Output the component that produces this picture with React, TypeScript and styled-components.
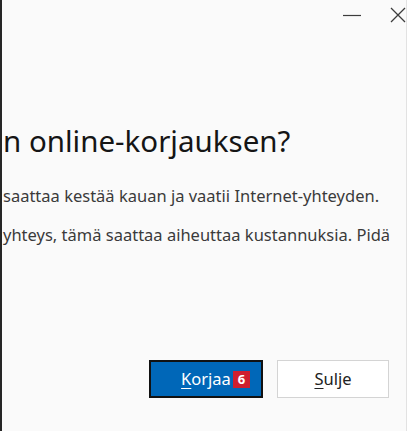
import React from 'react';
import styled, { createGlobalStyle } from 'styled-components';

const GlobalStyle = createGlobalStyle`
  html, body {
    margin: 0;
    padding: 0;
    background: #fafafa;
  }
`;

const Window = styled.div`
  box-sizing: border-box;
  width: 407px;
  height: 431px;
  display: flex;
  flex-direction: column;
  background: #fafafa;
  border-left: 2px solid #262626;
  border-right: 1px solid #e2e2e2;
  overflow: hidden;
  font-family: 'Noto Sans', 'Open Sans', sans-serif;
`;

const TitleBar = styled.div`
  height: 30px;
  display: flex;
  justify-content: flex-end;
  align-items: center;
  gap: 29px;
  padding-right: 0;
`;

const ControlButton = styled.button`
  border: none;
  background: none;
  padding: 0;
  display: flex;
  align-items: center;
  justify-content: center;
  color: #3c3c3c;
`;

const Content = styled.div`
  flex: 1;
  display: flex;
  flex-direction: column;
  padding-left: 1px;
`;

const Heading = styled.h1`
  margin: 93px 0 0 0;
  font-size: 29.5px;
  line-height: 36px;
  font-weight: 400;
  color: #151515;
  white-space: nowrap;
`;

const Paragraph = styled.p<{ $gap: number }>`
  margin: ${p => p.$gap}px 0 0 0;
  font-size: 16.5px;
  line-height: 20px;
  color: #3a3a3a;
  white-space: nowrap;
`;

const Footer = styled.div`
  margin-top: auto;
  display: flex;
  justify-content: flex-end;
  gap: 14px;
  padding: 0 17px 33px 0;
`;

const Button = styled.button<{ $primary?: boolean }>`
  position: relative;
  box-sizing: border-box;
  height: 38px;
  width: ${p => (p.$primary ? '114px' : '112px')};
  font-family: inherit;
  font-size: 16.5px;
  border: ${p => (p.$primary ? '2px solid #111' : '1px solid #d4d4d4')};
  background: ${p => (p.$primary ? '#0067b8' : '#ffffff')};
  color: ${p => (p.$primary ? '#ffffff' : '#222222')};
  box-shadow: ${p => (p.$primary ? 'inset 0 0 0 1px #0067b8' : 'none')};
  padding: 0 0 2px 0;
  cursor: pointer;

  u {
    text-underline-offset: 3px;
  }
`;

const Badge = styled.span`
  position: absolute;
  left: 82px;
  top: 9px;
  width: 17px;
  height: 17px;
  background: #cf1f2e;
  color: #fff;
  font-size: 13px;
  font-weight: 700;
  line-height: 17px;
  text-align: center;
`;

export default function App() {
  return (
    <>
      <GlobalStyle />
      <Window>
        <TitleBar>
          <ControlButton aria-label="Pienennä">
            <svg width="18" height="10" viewBox="0 0 18 10">
              <line x1="0" y1="5.5" x2="18" y2="5.5" stroke="currentColor" strokeWidth="1.2" />
            </svg>
          </ControlButton>
          <ControlButton aria-label="Sulje">
            <svg width="16" height="16" viewBox="0 0 16 16">
              <path d="M1 1 L15 15 M15 1 L1 15" stroke="currentColor" strokeWidth="1.3" fill="none" />
            </svg>
          </ControlButton>
        </TitleBar>
        <Content>
          <Heading>n online-korjauksen?</Heading>
          <Paragraph $gap={27}>saattaa kestää kauan ja vaatii Internet-yhteyden.</Paragraph>
          <Paragraph $gap={19}>yhteys, tämä saattaa aiheuttaa kustannuksia. Pidä</Paragraph>
          <Footer>
            <Button $primary>
              <u>K</u>orjaa
              <Badge>6</Badge>
            </Button>
            <Button>
              <u>S</u>ulje
            </Button>
          </Footer>
        </Content>
      </Window>
    </>
  );
}
